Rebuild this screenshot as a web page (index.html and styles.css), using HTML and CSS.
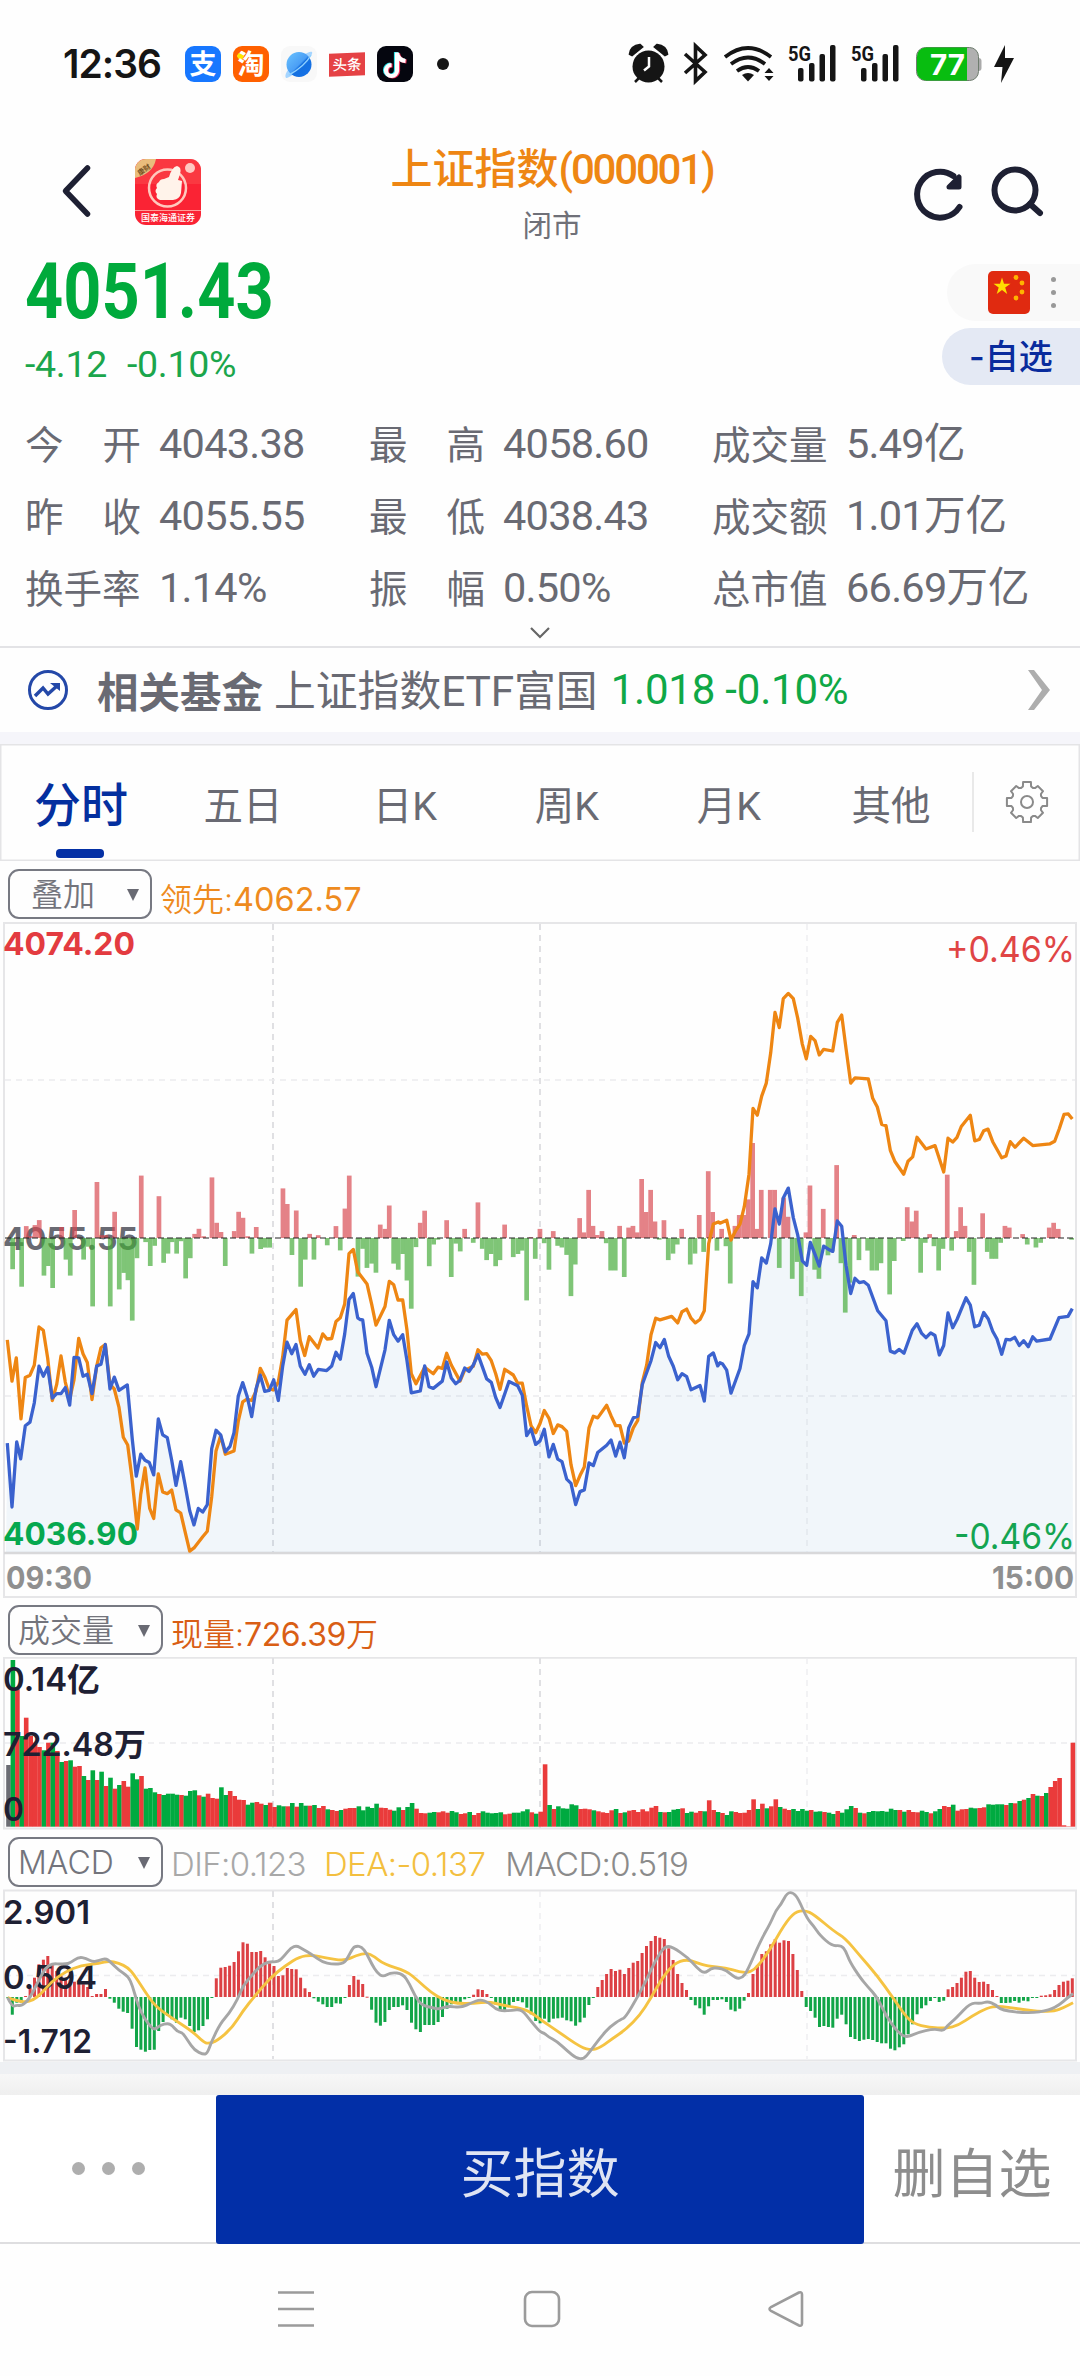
FILE: index.html
```html
<!DOCTYPE html>
<html lang="zh-CN">
<head>
<meta charset="utf-8">
<title>上证指数</title>
<link rel="stylesheet" href="styles.css">
</head>
<body>
<div class="status">
  <div class="status-left">
    <span class="clock">12:36</span>
    <span class="app alipay">支</span>
    <span class="app taobao">淘</span>
    <svg class="planet" width="36" height="36" viewBox="0 0 36 36"><defs><linearGradient id="pg" x1="0" y1="0" x2="1" y2="1"><stop offset="0" stop-color="#6cc4ff"/><stop offset=".5" stop-color="#4a9ef5"/><stop offset=".55" stop-color="#1470e0"/><stop offset="1" stop-color="#1672e8"/></linearGradient></defs><rect width="36" height="36" rx="9" fill="#f8f8f8"/><path d="M5 32C0 26 26 3 31 6c3 3-21 27-26 26z" fill="#a6d5ff"/><circle cx="18" cy="18.500" r="12.500" fill="url(#pg)"/><path d="M8 29Q24 20 30 9" stroke="#8fd0ff" stroke-width="1.500" fill="none"/></svg>
    <span class="toutiao">头条</span>
    <svg class="tiktok" width="36" height="36" viewBox="0 0 36 36"><rect width="36" height="36" rx="9" fill="#05060f"/><g fill="none" stroke-width="4.200"><path d="M19 6v18a5.500 5.500 0 1 1-5.500-5.500M19 7c1 5 4 7 8.500 7.500" stroke="#25e0e8"/><path d="M21 7v18a5.500 5.500 0 1 1-5.500-5.500M21 8c1 5 4 7 8.500 7.500" stroke="#f5315d"/><path d="M20 6.500v18a5.500 5.500 0 1 1-5.500-5.500M20 7.500c1 5 4 7 8.500 7.500" stroke="#fff"/></g></svg>
    <span class="more-dot"></span>
  </div>
  <svg class="status-icons" width="400" height="46" viewBox="620 42 400 46">
    <g fill="#151515">
      <circle cx="648.500" cy="67.500" r="16"/>
      <path d="M630 55q1-8 10-9l2 2-10 8zM667 55q-1-8-10-9l-2 2 10 8zM639 79l-4 4M658 79l4 4" stroke="#151515" stroke-width="2.500"/>
      <path d="M649 58v9.500l-5 4" stroke="#fff" stroke-width="2.500" fill="none"/>
      <path d="M685 55l20 18-9.500 9V47l9.500 9-20 18" fill="none" stroke="#151515" stroke-width="3.600"/>
      <g fill="none" stroke="#151515" stroke-width="3.800"><path d="M725 58q23-18 46 0"/><path d="M731 65q17-13 34 0"/><path d="M737 72q11-8 22 0"/></g>
      <path d="M742 76q6-4 12 0l-6 6.500z"/><path d="M764.500 74l4.500-5 4.500 5zM764.500 77l4.500 5 4.500-5z"/>
      <rect x="798" y="69" width="5.500" height="13.500" rx="2"/><rect x="809" y="64" width="5.500" height="18.500" rx="2"/><rect x="819.500" y="55" width="5.500" height="27.500" rx="2"/><rect x="830" y="46" width="5.500" height="36.500" rx="2"/>
      <rect x="861" y="69" width="5.500" height="13.500" rx="2"/><rect x="872" y="64" width="5.500" height="18.500" rx="2"/><rect x="882.500" y="55" width="5.500" height="27.500" rx="2"/><rect x="893" y="46" width="5.500" height="36.500" rx="2"/>
      <path d="M1005 46l-11 22h8.500l-1.500 16 13-25h-9z"/>
    </g>
    <text class="net" x="788" y="61.500" textLength="23" lengthAdjust="spacingAndGlyphs">5G</text>
    <text class="net" x="851" y="61.500" textLength="23" lengthAdjust="spacingAndGlyphs">5G</text>
    <rect x="975" y="59" width="6.500" height="13" rx="3" fill="#aaa"/>
    <rect x="916.500" y="48.500" width="62" height="33" rx="9" fill="#b0b0b0" stroke="#6f7d6f"/>
    <path d="M926 48.500h41v33h-41a9 9 0 0 1-9-9v-15a9 9 0 0 1 9-9z" fill="#08bd10"/>
    <text class="charge" x="930" y="76" textLength="35" lengthAdjust="spacingAndGlyphs">77</text>
  </svg>
</div>

<header class="head">
  <svg class="back" width="40" height="60" viewBox="0 0 40 60"><path d="M33.500 8L11.500 31l22 23" fill="none" stroke="#1e2033" stroke-width="5.500" stroke-linecap="round" stroke-linejoin="round"/></svg>
  <svg class="broker" width="66" height="67" viewBox="0 0 66 67">
    <defs><clipPath id="bc"><rect width="66" height="66" rx="11"/></clipPath></defs>
    <g clip-path="url(#bc)"><rect width="66" height="67" fill="#fa2334"/><rect width="66" height="25" fill="#f94a4c" opacity=".55"/><path d="M0 0h21Q18 15 0 19z" fill="#e9bd7c"/></g>
    <text x="10" y="13" class="broker-tag" transform="rotate(-35 10 12)" text-anchor="middle">康财</text>
    <circle cx="32.500" cy="29" r="18.500" fill="none" stroke="#ffc8bd" stroke-width="2.500"/>
    <path d="M34 18q3-10 8-11 5 1 3 8l-2 6 4 1-1 12q-1 6-8 7H25q-5-2-3-6-3-3 0-6-2-4 2-6 1-3 5-3z" fill="#fff3ea"/>
    <circle cx="55" cy="9" r="5" fill="#ffc9c2"/><path d="M0 51.500h66" stroke="#ff9d98"/>
    <text x="6" y="62" class="broker-name" textLength="54">国泰海通证券</text>
  </svg>
  <div class="title"><h1>上证指数<span class="code">(000001)</span></h1><p>闭市</p></div>
  <svg class="actions" width="140" height="64" viewBox="906 160 140 64"><g fill="none" stroke="#1e2033" stroke-width="6" stroke-linecap="round"><path d="M959.500 207a23 23 0 1 1-6-31"/><circle cx="1015" cy="190" r="20.500"/><path d="M1030 204l10 9"/></g><path d="M959 177v10h-10z" fill="#1e2033" stroke="#1e2033" stroke-width="5" stroke-linejoin="round"/></svg>
</header>

<section class="quote">
  <div class="price-col"><div class="price">4051.43</div><div class="change"><span>-4.12</span><span>-0.10%</span></div></div>
  <div class="side">
    <div class="market"><svg width="42" height="43" viewBox="0 0 42 43"><rect width="42" height="43" rx="5" fill="#e02a10"/><path d="M14 6.500l2 6.300h6.500l-5.300 3.800 2 6.400-5.200-3.900-5.300 3.900 2-6.400-5.200-3.800H12z" fill="#ffde00"/><g fill="#ffb400"><circle cx="28" cy="6.500" r="2.400"/><circle cx="34" cy="12" r="2.400"/><circle cx="34" cy="21" r="2.400"/><circle cx="28" cy="27" r="2.400"/></g></svg><i class="dots"><b></b><b></b><b></b></i></div>
    <button class="fav">-自选</button>
  </div>
</section>

<section class="stats">
  <dl><dt><span>今</span><span>开</span></dt><dd><span>4043.38</span></dd></dl>
  <dl><dt><span>最</span><span>高</span></dt><dd><span>4058.60</span></dd></dl>
  <dl><dt>成交量</dt><dd><span>5.49</span>亿</dd></dl>
  <dl><dt><span>昨</span><span>收</span></dt><dd><span>4055.55</span></dd></dl>
  <dl><dt><span>最</span><span>低</span></dt><dd><span>4038.43</span></dd></dl>
  <dl><dt>成交额</dt><dd><span>1.01</span>万亿</dd></dl>
  <dl><dt>换手率</dt><dd><span>1.14%</span></dd></dl>
  <dl><dt><span>振</span><span>幅</span></dt><dd><span>0.50%</span></dd></dl>
  <dl><dt>总市值</dt><dd><span>66.69</span>万亿</dd></dl>
</section>
<div class="expand"><svg width="24" height="14" viewBox="0 0 24 14"><path d="M3 2l9 9 9-9" fill="none" stroke="#666" stroke-width="2.200"/></svg></div>

<section class="fund">
  <svg width="42" height="42" viewBox="0 0 42 42"><circle cx="21" cy="21" r="18.500" fill="none" stroke="#2448a8" stroke-width="3"/><path d="M8 27l8-8 5 6 10-9" fill="none" stroke="#2448a8" stroke-width="3.500"/><path d="M23 14h10v8z" fill="#2448a8"/></svg>
  <strong>相关基金</strong><span class="fund-name">上证指数<em>ETF</em>富国</span><span class="fund-val">1.018 -0.10%</span>
  <svg class="go" width="28" height="44" viewBox="0 0 28 44"><path d="M3 2h6l16 20L9 42H3l14-20z" fill="#adadad"/></svg>
</section>

<nav class="tabs">
  <a class="active">分时</a><a>五日</a><a>日K</a><a>周K</a><a>月K</a><a>其他</a>
  <span class="gear"><svg width="44" height="46" viewBox="-22 -23 44 46"><path id="gear" fill="none" stroke="#8a8a8a" stroke-width="2" stroke-linejoin="round"/><circle r="6" fill="none" stroke="#8a8a8a" stroke-width="2"/></svg></span>
</nav>

<div class="legend first"><span class="select overlay">叠加<i></i></span><span class="lead">领先:<em>4062.57</em></span></div>
<svg class="chart" height="680" viewBox="0 920 1080 680">
  <g class="frame"><path d="M4 922H1076V1596H4z"/><path d="M4 1552H1076" class="thick"/></g>
  <g class="grid"><path d="M273 923V1551M540 923V1551" class="strong"/><path d="M807 923V1551M5 1079H1075M5 1395H1075"/></g>
  <g class="axis">
    <text x="3" y="953.500" fill="#e33b40" textLength="132">4074.20</text>
    <text x="3" y="1249" fill="#696a73" textLength="135">4055.55</text>
    <text x="3" y="1544" fill="#00aa46" textLength="135">4036.90</text>
    <text x="6" y="1588" fill="#8f8f8f" textLength="86">09:30</text>
    <text x="1074" y="1588" fill="#8f8f8f" textLength="82" text-anchor="end">15:00</text>
  </g>
  <g class="pct" text-anchor="end"><text x="1075" y="960.500" fill="#e04545" textLength="129">+0.46%</text><text x="1075" y="1548" fill="#10a648" textLength="121">-0.46%</text></g>
  <path id="area" fill="#4a90c8" fill-opacity=".075"/>
  <g id="flow" opacity=".68"></g>
  <path d="M5 1237H1073" stroke="#222" stroke-width="1.200" stroke-dasharray="6 3"/>
  <path id="lead" class="line" stroke="#ee8613"/>
  <path id="price" class="line" stroke="#3b62ce"/>
</svg>

<div class="legend"><span class="select">成交量<i></i></span><span class="now">现量:<em>726.39</em>万</span></div>
<svg class="chart" height="176" viewBox="0 1656 1080 176">
  <g class="frame"><path d="M4 1656.800H1076V1827.500H4z"/></g>
  <g class="grid"><path d="M273 1657V1827M540 1657V1827" class="strong"/><path d="M807 1657V1827M5 1742H1075"/></g>
  <g id="volume"></g>
  <g class="axis dark"><text x="3" y="1690" textLength="97">0.14亿</text><text x="3" y="1755" textLength="143">722.48万</text><text x="3" y="1820" textLength="21">0</text></g>
</svg>

<div class="legend"><span class="select">MACD<i></i></span><span class="dif">DIF:0.123</span><span class="dea">DEA:-0.137</span><span class="macd-v">MACD:0.519</span></div>
<svg class="chart" height="173" viewBox="0 1888 1080 173">
  <g class="frame"><path d="M4 1889.500H1076V2059.500H4z"/></g>
  <g class="grid"><path d="M273 1890V2058" class="strong"/><path d="M540 1890V2058M807 1890V2058M5 1974.500H1075"/></g>
  <g id="macd"></g>
  <g class="axis dark"><text x="3" y="1922.500" textLength="87">2.901</text><text x="3" y="1988" textLength="94">0.594</text><text x="3" y="2052" textLength="89">-1.712</text></g>
  <path id="dea" class="line thin" stroke="#f5c342"/>
  <path id="dif" class="line thin" stroke="#a6a6a6"/>
</svg>
<div class="band"></div>

<footer class="bar"><span class="etc"><b></b><b></b><b></b></span><button class="buy">买指数</button><span class="remove">删自选</span></footer>
<div class="sysnav"><svg width="1080" height="130" viewBox="0 2245 1080 130"><g fill="none" stroke="#9b9b9b" stroke-width="2.600"><path d="M278 2293.500h36M278 2310h36M278 2326.500h36"/><rect x="525" y="2293" width="34" height="34" rx="7"/><path d="M799 2293.500L771 2308q-3 2 0 4l28 14.500q3 1 3-2v-29q0-3-3-2z"/></g></svg></div>
<script src="charts.js"></script>
</body>
</html>
```
FILE: styles.css
```css
* { box-sizing: border-box; }
body { margin: 0; width: 1080px; height: 2376px; overflow: hidden; display: flex; flex-direction: column; background: #fefefe; color: #696a73; font-family: Inter, "Noto Sans CJK SC", sans-serif; }
body > * { flex: none; }
h1, p, dl, dd { margin: 0; }
em, i, b { font-style: normal; }
button { border: 0; font-family: inherit; padding: 0; }
svg { display: block; flex: none; }

.status { height: 140px; padding: 0 60px 12px 63px; display: flex; align-items: center; justify-content: space-between; }
.status-left { display: flex; align-items: center; height: 46px; gap: 12px; }
.clock { width: 110px; font: 600 39px/46px Inter; letter-spacing: -1px; color: #151515; }
.app { width: 36px; height: 36px; border-radius: 9px; color: #fff; font: 700 27px/34px "Noto Sans CJK SC"; text-align: center; }
.alipay { background: #1777ff; }
.taobao { background: radial-gradient(circle at 7.500px 10px, #ffe600 0 3px, #ff6000 3.500px); }
.toutiao { width: 36px; height: 23px; background: #e54245; color: #fff; font: 500 14.500px/22px "Noto Sans CJK SC"; text-align: center; transform: skewY(-2deg); }
.more-dot { width: 12px; height: 12px; border-radius: 50%; background: #151515; margin-left: 12px; }
.net { font: 700 21px Roboto; fill: #151515; }
.charge { font: 700 29px Inter; fill: #fff; }

.head { height: 110px; display: flex; align-items: flex-start; padding-left: 54px; }
.back { margin-top: 20px; }
.broker { margin: 19px 0 0 41px; overflow: visible; }
.broker-tag { font: 700 7px "Noto Sans CJK SC"; fill: #73501f; }
.broker-name { font: 500 9px "Noto Sans CJK SC"; fill: #fff; }
.title { width: 360px; margin-left: 171px; text-align: center; }
.title h1 { font: 500 42px/60px Roboto, "Noto Sans CJK SC"; color: #ee8613; white-space: nowrap; }
.code { display: inline-block; letter-spacing: -2.200px; }
.title p { font: 400 29.500px/44px "Noto Sans CJK SC"; color: #6f7078; margin-top: 1px; }
.actions { margin: 20px 0 0 174px; }

.quote { height: 162px; display: flex; justify-content: space-between; }
.price-col { padding-left: 25px; }
.price { font: 700 77px/82px Roboto; color: #00aa3c; height: 82px; transform: scaleX(.865); transform-origin: left; margin-top: 1px; }
.change { display: flex; gap: 20px; font: 400 37.500px/50px Roboto; letter-spacing: -.3px; color: #1ba64c; margin-top: 6px; }
.side { display: flex; flex-direction: column; align-items: flex-end; gap: 7px; padding-top: 14px; }
.market { width: 133px; height: 57px; border-radius: 29px 0 0 29px; background: #f9f9f9; display: flex; align-items: center; padding-left: 41px; gap: 21px; }
.dots { display: flex; flex-direction: column; gap: 8px; }
.dots b { width: 5px; height: 5px; border-radius: 50%; background: #999; }
.fav { width: 138px; height: 57px; border-radius: 29px 0 0 29px; background: #e4e9f4; color: #092b9d; font-size: 34px; font-weight: 500; line-height: 56px; text-align: left; padding-left: 27px; }

.stats { display: grid; grid-template-columns: 344px 343px 1fr; grid-auto-rows: 72px; padding-left: 25px; height: 210px; }
.stats dl { display: flex; height: 68px; font: 400 38.500px/64px Roboto, "Noto Sans CJK SC"; white-space: nowrap; }
.stats dt { width: 116px; display: flex; justify-content: space-between; font-family: "Noto Sans CJK SC"; line-height: 61px; }
.stats dd { margin-left: 18px; font-size: 41.500px; }
.stats dd span { font-family: Roboto; font-size: 41.500px; display: inline-block; letter-spacing: -.75px; }
.expand { height: 26px; display: flex; justify-content: center; padding-top: 4px; border-bottom: 2px solid #e3e3e6; }

.fund { height: 84px; display: flex; align-items: center; padding: 0 27px; font: 400 41.800px/80px "Noto Sans CJK SC"; white-space: nowrap; }
.fund strong { font-weight: 700; margin-left: 28px; font-size: 41.500px; }
.fund-name { margin-left: 11px; }
.fund-name em { font-family: Roboto; font-size: 42.500px; letter-spacing: -.2px; }
.fund-val { font: 400 42px/86px Roboto; color: #0fa846; margin-left: 13px; letter-spacing: -.2px; }
.go { margin-left: auto; }

.tabs { height: 129px; border-top: 12px solid #f5f5fa; display: flex; box-shadow: inset 0 0 0 1.500px #e4e4e6; }
.tabs a { width: 162px; text-align: center; font: 400 39.500px/126px Roboto, "Noto Sans CJK SC"; }
.tabs .active { position: relative; color: #042f9f; font-size: 47px; font-weight: 500; line-height: 124px; }
.tabs .active::after { content: ""; position: absolute; left: 56px; bottom: 3px; width: 48px; height: 9px; border-radius: 4px; background: #0430a5; }
.gear { flex: 1; display: flex; align-items: center; justify-content: center; border-left: 2px solid #e9e9e9; height: 60px; margin: 28px 0 0; }

.legend { height: 56px; display: flex; align-items: center; padding: 1px 0 0 8px; font-size: 32px; white-space: nowrap; }
.legend > span:not(.select) { padding-top: 5px; }
.legend.first { height: 60px; padding-top: 6px; }
.select { width: 155px; height: 50px; border: 2px solid #777982; border-radius: 11px; display: flex; align-items: center; justify-content: space-between; padding: 2px 11px 0 8px; font-size: 32px; font-weight: 350; line-height: 44px; color: #73747c; margin-right: 8px; }
.select i { border: 6.500px solid transparent; border-top: 12px solid #696a73; border-bottom: 0; }
.overlay { width: 144px; padding-left: 21px; }
.lead { color: #ee8b1e; font-weight: 350; font-size: 32px; }
.lead em { font-size: 32.500px; font-weight: 400; }
.now { color: #d95e15; font-weight: 350; }
.now em { font-weight: 400; letter-spacing: -.4px; }
.dif, .dea, .macd-v { font-size: 33px; letter-spacing: -.6px; font-weight: 350; }
.dif { color: #a8a8a8; margin-right: 18px; }
.dea { color: #f3bf40; margin-right: 20px; }
.macd-v { color: #8b8b8b; }

.chart { width: 1080px; font-family: Inter, "Noto Sans CJK SC"; }
.frame path { fill: none; stroke: #e6e6e8; stroke-width: 2; }
.frame .thick { stroke: #d8d8da; stroke-width: 2.500; }
.grid path { fill: none; stroke: #ececee; stroke-width: 1.300; stroke-dasharray: 6 5; }
.grid .strong { stroke: #e0e0e3; stroke-width: 2; }
.axis { font-size: 31.500px; font-weight: 700; }
.dark { fill: #1e2033; font-size: 32px; font-weight: 600; }
.pct { font-size: 36px; font-weight: 400; }
.line { fill: none; stroke-width: 3.300; stroke-linejoin: round; }
.thin { stroke-width: 2.900; }
.up { fill: #ea3b3b; }
.down { fill: #00aa40; }
.flat { fill: #6b6c73; }
#flow .up { fill: #d94850; }
#flow .down { fill: #44ab38; }
#macd .up { fill: #dc4044; }
#macd .down { fill: #12a548; }

.band { height: 33px; background: linear-gradient(#eef0f3 0 12px, #f7f7f7 12px, #efefef); }
.bar { height: 149px; display: flex; align-items: stretch; background: #fff; border-bottom: 2px solid #dedee0; }
.etc { width: 216px; display: flex; gap: 17px; justify-content: center; align-items: center; }
.etc b { width: 13px; height: 13px; border-radius: 50%; background: #aeaeae; }
.buy { width: 648px; height: 149px; border-radius: 3px; background: #022fa7; color: #dfe4f3; font-size: 53px; line-height: 159px; }
.remove { flex: 1; text-align: center; color: #8d8d8d; font-size: 53px; line-height: 159px; }
.sysnav { height: 130px; }
```
FILE: charts.js
```js
const byId = id => document.getElementById(id);
const BASE = 1237;

/* The session is stored in three stretches, each with its own origin and step. */
const STRETCH = [
  { x: 0, y: 860, sy: 2.178, base: 821 },
  { x: 360, y: 900, sy: 2.306, base: 777 },
  { x: 720, y: 900, sy: 2.306, base: 777 }
];
const price = [
  "22,1268 36,1407 50,1265 62,1302 76,1230 90,1222 103,1180 117,1100 130,1122 143,1103 157,1170 170,1160 183,1160 196,1147 209,1185 222,1081 236,1082 249,1122 262,1118 276,1160 290,1100 303,1096 316,1053 330,1150 343,1124 357,1153 382,1141 397,1260 409,1340 422,1292 435,1305 448,1310 461,1337 475,1215 488,1250 502,1256 515,1305 528,1360 542,1308 555,1358 569,1415 582,1446 595,1410 608,1418 622,1402 635,1280 648,1240 662,1250 676,1287 690,1275 702,1245 715,1165 728,1136 741,1165 755,1210 768,1150 781,1120 794,1155 808,1153 821,1130 835,1175 848,1100 861,1048 875,1073 888,1053 901,1100 915,1118 928,1097 941,1122 955,1107 980,1110 995,1100 1008,1070 1021,1085 1034,1030 1047,955 1060,942 1073,995",
  "0,965 8,966 21,1043 35,1075 48,1120 75,1035 88,967 101,1000 114,1015 128,1000 141,1060 154,1134 181,1130 194,1072 207,1120 220,1124 247,1107 260,1063 274,1100 287,1113 300,1105 314,1077 327,1085 340,1070 354,1046 380,1102 394,1110 407,1145 420,1168 447,1108 473,1118 487,1140 500,1233 513,1217 527,1253 540,1245 553,1218 567,1282 580,1253 593,1287 606,1293 620,1333 633,1343 647,1392 660,1362 673,1358 687,1296 700,1302 713,1272 740,1255 753,1243 767,1280 780,1248 793,1284 806,1215 820,1192 833,1188 847,1115 873,1060 887,1018 900,1030 913,1011 926,1050 940,1073 953,1104 966,1090 980,1097 993,1127 1020,1117 1033,1153 1046,1050 1060,1042 1073,1072",
  "0,1065 8,1068 20,1082 33,1135 60,1078 73,1025 87,998 99,878 112,892 125,823 139,835 152,790 165,710 178,745 190,685 205,662 220,730 233,770 247,830 260,840 271,787 285,815 298,842 311,796 325,803 338,808 352,738 365,750 378,840 392,905 405,870 418,880 432,878 445,886 473,945 498,968 511,1038 524,1042 538,1034 552,1043 577,990 591,975 605,997 618,1007 632,996 645,1002 658,1047 671,1025 684,950 698,984 711,965 738,915 751,932 764,982 778,978 791,949 805,964 818,992 831,1010 845,1045 858,1011 871,1012 884,1006 898,1025 911,1014 925,1028 938,1005 950,1015 990,1010 1017,961 1044,958 1057,940"
];
const lead = [
  "22,1043 36,1133 49,1082 63,1215 76,1125 90,1120 103,1098 117,1015 130,1022 143,1083 157,1175 170,1140 183,1078 196,1135 209,1172 222,1130 236,1040 249,1073 262,1092 276,1173 290,1100 303,1060 316,1053 330,1140 343,1150 357,1190 370,1255 383,1272 396,1345 412,1455 422,1380 435,1322 449,1410 461,1432 475,1335 488,1374 502,1378 515,1370 528,1413 542,1420 555,1460 569,1503 582,1496 608,1472 622,1460 635,1385 648,1285 662,1252 676,1292 702,1285 715,1220 728,1178 741,1172 755,1175 768,1155 781,1105 795,1125 808,1150 821,1152 835,1135 848,1080 861,1000 888,977 901,1045 914,1077 928,1036 954,1061 968,1030 981,1041 995,1040 1008,1003 1021,995 1034,965 1047,855 1060,846 1073,895",
  "0,862 21,883 35,930 48,978 75,935 88,877 101,885 114,920 128,920 141,990 154,1090 168,1113 194,1075 220,1090 234,1075 247,1078 260,1043 274,1070 300,1107 314,1082 340,1073 354,1035 367,1045 380,1044 394,1060 407,1090 420,1126 434,1080 460,1093 473,1112 487,1112 500,1165 513,1210 527,1226 540,1205 553,1175 567,1193 580,1228 593,1208 606,1212 620,1223 633,1300 647,1348 660,1325 673,1305 687,1215 700,1188 713,1192 740,1163 753,1187 767,1210 780,1210 793,1250 806,1245 820,1215 833,1198 847,1110 860,1070 873,1000 887,962 900,966 935,958 953,973 966,947 980,941 993,962 1006,973 1020,965 1033,945 1046,790 1060,745 1075,740",
  "0,743 20,736 33,782 47,760 60,745 73,705 87,630 99,478 112,494 125,450 139,420 152,350 165,257 178,292 190,225 205,213 220,225 233,270 247,330 259,364 272,312 285,322 298,355 311,342 338,346 352,280 365,263 378,340 392,420 405,408 445,410 458,455 472,475 485,515 498,518 511,575 524,600 551,630 564,600 578,590 591,545 618,572 645,564 671,625 684,547 698,556 711,545 724,520 751,494 764,553 778,550 791,530 804,526 818,555 845,592 858,588 871,555 885,568 911,547 938,564 990,560 1004,554 1018,525 1032,492 1045,491 1057,503"
];
const flow = [
  "38,889 65,927 79,795 92,817 105,793 118,782 132,903 145,882 158,930 185,797 198,868 211,903 224,760 251,868 264,840 278,970 291,699 305,815 318,815 331,970 344,764 358,933 371,897 384,913 397,1001 411,865 424,685 437,830 451,882 464,838 477,730 491,875 504,855 517,830 530,855 544,828 557,909 571,865 584,812 597,801 611,817 636,689 650,788 663,808 676,882 703,806 716,764 729,777 743,817 756,855 769,797 782,845 796,842 809,842 849,713 862,747 876,858 889,761 902,927 916,868 929,812 942,868 955,815 982,837 1008,795 1021,848 1035,757 1048,685 1074,905",
  "8,802 21,846 35,836 48,857 61,746 75,756 88,702 101,836 115,850 128,814 141,875 154,940 168,798 181,742 194,714 208,842 221,792 234,781 260,736 274,867 287,790 301,808 314,756 340,788 354,695 367,802 380,828 394,814 407,842 420,828 434,746 460,821 474,814 487,806 500,921 513,775 526,825 540,756 553,789 567,850 580,761 593,795 606,799 620,816 633,911 646,838 659,731 672,764 686,666 699,749 712,770 726,761 739,789 752,852 766,852 779,749 793,867 806,753 819,749 832,764 845,641 859,717 872,666 885,739 898,781 912,736 925,828 939,813 952,792 965,756 991,838 1005,813 1018,724 1031,809 1045,623 1058,717 1071,806",
  "5,756 18,796 31,882 45,749 58,724 71,724 85,688 98,558 111,756 124,666 151,666 164,666 178,846 191,684 204,728 217,871 231,832 244,911 258,764 270,656 284,850 297,871 310,710 324,817 337,808 350,609 363,835 376,949 390,880 403,770 417,828 443,806 456,852 470,852 483,835 509,907 523,830 550,784 562,706 576,739 589,714 602,857 616,788 629,768 642,796 656,852 669,802 682,631 695,806 709,761 722,706 735,749 748,809 762,885 788,720 802,809 815,825 828,825 842,788 855,749 868,753 908,768 922,792 948,799 962,788 988,753 1001,742 1015,756 1055,781"
];

const pairs = s => s.split(" ").map(p => p.split(",").map(Number));
const place = series => series.flatMap((s, i) => pairs(s).map(([x, y]) =>
  [STRETCH[i].x + x / 3, STRETCH[i].y + y / STRETCH[i].sy]));
const toPath = pts => "M" + pts.map(p => p[0].toFixed(1) + " " + p[1].toFixed(1)).join("L");
const rect = (x, y, w, h, cls) =>
  `<rect class="${cls}" x="${x.toFixed(1)}" y="${y.toFixed(1)}" width="${w}" height="${h.toFixed(1)}"/>`;

/* A bar from the base line to its tip. */
const bar = (x, tip, base, w) =>
  rect(x, Math.min(tip, base), w, Math.max(1, Math.abs(tip - base)), tip < base ? "up" : "down");

const pricePts = place(price);
byId("price").setAttribute("d", toPath(pricePts));
byId("area").setAttribute("d", toPath(pricePts) + "L1073 1551L6 1551Z");
byId("lead").setAttribute("d", toPath(place(lead)));
byId("flow").innerHTML = flow.map((s, i) => pairs(s).map(([x, y]) =>
  bar(STRETCH[i].x + x / 3 - 2.4, BASE + (y - STRETCH[i].base) / STRETCH[i].sy, BASE, 4.7)).join("")).join("");

/* Minute volume: direction and top edge, in thirds of a pixel. */
const volume = "f612 g297 r385 g525 r470 r525 r545 r558 g568 r545 g545 r570 g603 r600 g598 r617 r615 g645 r657 g628 r657 g632 r675 g650 r683 g672 r660 r677 g637 g655 r645 g683 g681 g694 r699 g702 g698 g698 g701 r702 g704 g690 g688 r703 g707 r698 r711 r713 g679 g702 r690 r705 r716 r717 g731 g725 r723 r728 g732 r725 r738 g733 g736 r736 g726 r737 g726 g734 r734 g732 r741 r735 g745 r747 r750 g747 r743 r741 r741 g736 g748 g737 g741 g728 r740 r741 r746 g749 g739 r747 g738 g726 r743 r756 r757 g755 g753 r754 r751 r755 g750 g754 r759 r757 g753 r762 r756 g751 g755 g757 g756 g754 r760 r758 g755 g755 g751 g745 r754 g758 r752 r610 g732 r744 g736 g742 g743 g730 g733 r744 r743 r745 g748 r751 r754 r756 r748 g744 r756 g754 r749 r747 r753 r745 r751 r740 r735 g753 r754 g753 g746 g744 r742 g756 g752 r755 r750 g751 r718 r747 g753 r756 g762 g751 r753 r756 r755 r747 r715 g744 r728 g742 r736 r715 g738 r743 r747 g744 g750 g744 g749 r747 g752 g751 r753 g755 g759 r750 g755 g745 g735 r741 g755 r757 g753 g750 g751 g750 g752 g743 g747 r747 g752 r747 r753 r754 g749 g753 r757 g751 g744 r735 r738 g731 r749 r745 r744 g740 g742 r741 r739 g730 g731 g730 g730 r732 g726 r727 g720 r716 g711 r699 g704 r705 g696 r678 r660 r651 r793 r796 r545".split(" ");
const CLS = { r: "up", g: "down", f: "flat" };
byId("volume").innerHTML = volume.map((v, i) => {
  const top = 1560 + v.slice(1) / 3;
  return rect(6.2 + i * 4.435, top, 4.6, 1825.7 - top, CLS[v[0]]);
}).join("");

const macd = [1310,1361,1325,1325,1305,1280,1250,1210,1196,1185,1210,1230,1245,1255,1258,1262,1268,1270,1278,1305,1299,1299,1284,1313,1325,1343,1352,1356,1403,1458,1466,1472,1467,1466,1410,1383,1365,1375,1385,1370,1375,1395,1413,1408,1395,1375,1310,1252,1220,1218,1214,1203,1171,1144,1148,1173,1173,1170,1189,1207,1215,1245,1243,1221,1224,1225,1250,1282,1293,1312,1322,1330,1338,1338,1327,1328,1310,1272,1245,1256,1269,1307,1346,1385,1394,1383,1347,1338,1338,1333,1347,1385,1405,1413,1392,1392,1392,1383,1368,1343,1330,1325,1327,1315,1311,1301,1285,1287,1299,1311,1330,1350,1353,1336,1323,1320,1324,1340,1360,1380,1387,1373,1384,1373,1372,1370,1378,1381,1394,1384,1370,1332,1310,1278,1257,1239,1224,1230,1226,1239,1221,1205,1200,1176,1155,1140,1125,1130,1134,1162,1197,1239,1266,1287,1317,1333,1342,1361,1336,1317,1317,1315,1323,1346,1351,1343,1319,1296,1239,1213,1179,1171,1150,1134,1145,1138,1140,1179,1227,1290,1338,1350,1370,1398,1395,1398,1400,1373,1361,1390,1428,1434,1440,1436,1434,1437,1443,1447,1447,1463,1468,1459,1450,1420,1390,1360,1342,1333,1320,1311,1323,1319,1285,1278,1266,1250,1232,1230,1250,1263,1262,1269,1287,1305,1326,1326,1325,1320,1325,1319,1321,1311,1311,1304,1303,1300,1287,1272,1262,1259,1252];
byId("macd").innerHTML = macd.map((v, i) => bar(6.4 + i * 4.435, 1560 + v / 3, 1996, 3)).join("");

const dif = [
  "22,1310 35,1338 48,1332 62,1335 85,1315 110,1262 140,1207 190,1210 205,1205 228,1188 250,1192 270,1203 288,1198 307,1192 320,1202 345,1228 372,1245 385,1275 397,1320 410,1355 430,1388 448,1408 465,1392 488,1387 500,1393 515,1412 530,1415 545,1438 565,1468 590,1480 602,1478 615,1440 640,1387 665,1358 690,1315 705,1275 730,1245 755,1215 780,1202 808,1203 825,1185 845,1160 862,1154 880,1165 905,1180 935,1203 965,1210 998,1208 1010,1190 1025,1160 1035,1155 1050,1157 1065,1178 1080,1210 1095,1235 1112,1248 1135,1234 1170,1238 1190,1270 1205,1305 1225,1333 1255,1340 1275,1345 1300,1335 1340,1340 1370,1325 1395,1315 1420,1325 1440,1345 1460,1350 1485,1348 1515,1345 1540,1378",
  "0,1413 12,1416 25,1428 50,1442 80,1470 105,1492 127,1494 145,1472 175,1430 205,1395 235,1375 248,1370 285,1305 310,1255 335,1198 362,1155 385,1158 430,1190 455,1220 477,1238 497,1222 515,1220 540,1227 570,1253 588,1250 602,1230 640,1140 670,1085 685,1048 700,1030 718,995 735,995 750,1013 775,1072 795,1095 812,1122 848,1155 875,1153 888,1170 900,1203 930,1250 950,1275 980,1310 1005,1365 1040,1415 1065,1430 1095,1415 1145,1403 1172,1410 1182,1395 1208,1372 1250,1325 1280,1328 1300,1321 1322,1330 1340,1348 1420,1357 1480,1348 1510,1330 1530,1312 1548,1298"
];
const dea = [
  "22,1310 50,1320 75,1323 95,1318 120,1298 150,1262 190,1232 235,1213 290,1207 315,1200 345,1206 372,1220 390,1242 420,1290 450,1335 500,1372 560,1412 590,1443 605,1448 630,1440 675,1400 705,1350 740,1305 785,1250 830,1213 870,1187 905,1182 945,1190 1000,1200 1035,1183 1065,1176 1085,1185 1115,1210 1180,1230 1215,1260 1250,1293 1290,1318 1330,1328 1375,1327 1420,1322 1460,1333 1515,1342 1545,1356",
  "0,1375 50,1410 120,1460 150,1467 175,1460 210,1433 250,1405 290,1363 320,1315 355,1250 390,1207 425,1195 455,1205 485,1215 540,1220 580,1233 610,1235 635,1213 665,1170 710,1090 740,1053 770,1048 795,1060 855,1112 885,1130 930,1185 980,1245 1025,1310 1060,1363 1085,1388 1130,1400 1180,1402 1215,1393 1255,1365 1300,1340 1330,1335 1400,1345 1450,1352 1495,1350 1520,1340 1548,1325"
];

/* Quadratic segments through the midpoints keep the averages smooth. */
const smooth = pts => {
  let d = "M" + pts[0];
  for (let i = 1; i < pts.length - 1; i++) {
    const mid = [(pts[i][0] + pts[i + 1][0]) / 2, (pts[i][1] + pts[i + 1][1]) / 2];
    d += "Q" + pts[i] + " " + mid;
  }
  return d + "L" + pts[pts.length - 1];
};
const average = series => series.flatMap((s, i) =>
  pairs(s).map(([x, y]) => [i * 540 + x / 2.904, 1560 + y / 3]));
byId("dif").setAttribute("d", smooth(average(dif)));
byId("dea").setAttribute("d", smooth(average(dea)));

document.querySelectorAll("text[textLength]").forEach(t => t.setAttribute("lengthAdjust", "spacingAndGlyphs"));

/* Eight teeth of the settings gear; the diagonal ones are a little shorter. */
const teeth = [];
for (let i = 0; i < 8; i++) {
  const tip = i % 2 ? 19.3 : 20.5;
  [[-22.5, 15.3], [-15, 16], [-11, tip], [11, tip], [15, 16]].forEach(([a, r]) => {
    const t = (i * 45 + a) * Math.PI / 180;
    teeth.push([r * Math.sin(t), -r * Math.cos(t)]);
  });
}
byId("gear").setAttribute("d", toPath(teeth) + "Z");
```
